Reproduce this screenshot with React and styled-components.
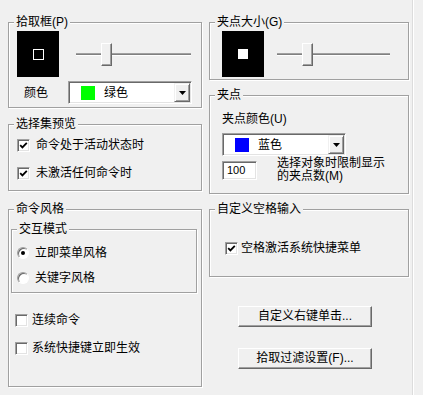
import styled, {createGlobalStyle} from "styled-components"

const GlobalStyle = createGlobalStyle`
  html, body {
    margin: 0;
    padding: 0;
    background: #f0f0f0;
  }
  body {
    font-family: "Liberation Sans", "Noto Sans CJK SC", sans-serif;
    font-size: 12px;
    color: #000;
  }
`

const Page = styled.div`
  width: 413px;
  height: 395px;
  box-sizing: border-box;
  display: flex;
  gap: 7px;
  padding-left: 8px;
  border-right: 1px solid #dcdcdc;
  box-shadow: 1px 0 0 #fff;
  overflow: hidden;
`

const Column = styled.div`
  display: flex;
  flex-direction: column;
  width: ${(p) => p.$w}px;
  flex-shrink: 0;
`

const Group = styled.div`
  position: relative;
  box-sizing: border-box;
  height: ${(p) => p.$h}px;
  margin-top: ${(p) => p.$mt}px;
  border: 1px solid #a0a0a0;
  box-shadow: inset 1px 1px 0 #fff, 1px 1px 0 #fff;
`

const InnerGroup = styled(Group)`
  margin-left: 2px;
  margin-right: 4px;
`

const Legend = styled.span`
  position: absolute;
  top: -8px;
  left: 5px;
  padding: 0 2px;
  line-height: 14px;
  background: #f0f0f0;
  white-space: nowrap;
`

const PreviewRow = styled.div`
  display: flex;
  align-items: center;
  padding: 8px 0 0 ${(p) => p.$pl}px;
`

const Preview = styled.div`
  width: 42px;
  height: 46px;
  background: #000;
  display: flex;
  align-items: center;
  justify-content: center;
  flex-shrink: 0;
`

const Marker = styled.div`
  box-sizing: border-box;
  width: ${(p) => (p.$filled ? 10 : 11)}px;
  height: ${(p) => (p.$filled ? 10 : 11)}px;
  border: 1px solid #fff;
  background: ${(p) => (p.$filled ? "#fff" : "transparent")};
`

const SliderBox = styled.div`
  position: relative;
  width: ${(p) => p.$w}px;
  height: 23px;
  margin-left: ${(p) => p.$ml}px;
  display: flex;
  align-items: center;
`

const Track = styled.div`
  width: 100%;
  height: 3px;
  box-sizing: border-box;
  background: #808080;
  border-top: 1px solid #a0a0a0;
  border-bottom: 1px solid #fff;
`

const Thumb = styled.div`
  position: absolute;
  top: 0;
  left: 25px;
  width: 11px;
  height: 23px;
  box-sizing: border-box;
  background: #f0f0f0;
  border: 1px solid;
  border-color: #fff #696969 #696969 #fff;
  box-shadow: inset -1px -1px 0 #a0a0a0;
`

const FieldRow = styled.div`
  display: flex;
  align-items: center;
  margin-top: 4px;
  padding-left: 15px;
`

const FieldLabel = styled.span`
  width: 44px;
  line-height: 14px;
`

const ComboBox = styled.div`
  width: 124px;
  height: 23px;
  box-sizing: border-box;
  background: #fff;
  border: 1px solid;
  border-color: #a0a0a0 #fff #fff #a0a0a0;
  box-shadow: inset 1px 1px 0 #696969, inset -1px -1px 0 #e3e3e3;
  display: flex;
  align-items: center;
  padding-left: 12px;
  padding-right: 1px;
  margin-top: ${(p) => p.$mt || 0}px;
`

const Swatch = styled.span`
  width: 14px;
  height: 14px;
  background: ${(p) => p.$color};
  flex-shrink: 0;
`

const ComboText = styled.span`
  flex: 1;
  margin-left: 9px;
  line-height: 14px;
`

const DropButton = styled.span`
  width: 16px;
  height: 19px;
  box-sizing: border-box;
  background: #f0f0f0;
  border: 1px solid;
  border-color: #f0f0f0 #696969 #696969 #f0f0f0;
  box-shadow: inset 1px 1px 0 #fff, inset -1px -1px 0 #a0a0a0;
  display: flex;
  align-items: center;
  justify-content: center;
`

const CheckList = styled.div`
  display: flex;
  flex-direction: column;
  gap: ${(p) => p.$gap}px;
  padding: ${(p) => p.$pt}px 0 0 ${(p) => p.$pl}px;
`

const Option = styled.label`
  display: flex;
  align-items: center;
  height: 20px;
  gap: ${(p) => p.$gap}px;
  white-space: nowrap;
  line-height: 14px;
`

const Box = styled.span`
  width: 13px;
  height: 13px;
  box-sizing: border-box;
  background: #fff;
  border: 1px solid;
  border-color: #a0a0a0 #fff #fff #a0a0a0;
  box-shadow: inset 1px 1px 0 #696969, inset -1px -1px 0 #e3e3e3;
  display: flex;
  align-items: center;
  justify-content: center;
  flex-shrink: 0;
`

const RadioRing = styled(Box)`
  width: 12px;
  height: 12px;
  border-radius: 50%;
  box-shadow: inset 1px 1px 0 #696969;
`

const Dot = styled.span`
  width: 4px;
  height: 4px;
  border-radius: 50%;
  background: #000;
`

const PlainLabel = styled.div`
  margin-top: ${(p) => p.$mt}px;
  line-height: 14px;
`

const Section = styled.div`
  padding-left: ${(p) => p.$pl}px;
`

const LimitRow = styled.div`
  display: flex;
  align-items: center;
  margin-top: 1px;
`

const Edit = styled.div`
  width: 35px;
  height: 19px;
  box-sizing: border-box;
  background: #fff;
  border: 1px solid;
  border-color: #a0a0a0 #fff #fff #a0a0a0;
  box-shadow: inset 1px 1px 0 #696969, inset -1px -1px 0 #e3e3e3;
  padding-left: 4px;
  font-size: 11px;
  line-height: 17px;
`

const Note = styled.div`
  margin-left: 20px;
  line-height: 13px;
`

const ButtonStack = styled.div`
  display: flex;
  flex-direction: column;
  padding-left: 29px;
`

const PushButton = styled.button`
  width: 134px;
  height: 21px;
  margin-top: ${(p) => p.$mt}px;
  padding: 0;
  box-sizing: border-box;
  font: inherit;
  color: #000;
  background: #f0f0f0;
  border: 1px solid;
  border-color: #fff #696969 #696969 #fff;
  box-shadow: inset -1px -1px 0 #a0a0a0;
  line-height: 17px;
`

function Slider({w, ml}) {
  return (
    <SliderBox $w={w} $ml={ml}>
      <Track />
      <Thumb />
    </SliderBox>
  )
}

function Combo({color, text, mt}) {
  return (
    <ComboBox $mt={mt}>
      <Swatch $color={color} />
      <ComboText>{text}</ComboText>
      <DropButton>
        <svg width="7" height="4" viewBox="0 0 7 4">
          <polygon points="0,0 7,0 3.5,4" fill="#000" />
        </svg>
      </DropButton>
    </ComboBox>
  )
}

function Check({checked, gap = 6, children}) {
  return (
    <Option $gap={gap}>
      <Box>
        {checked && (
          <svg width="9" height="9" viewBox="0 0 9 9">
            <path d="M1.2 4.2 L3.4 6.4 L7.8 1.8" fill="none" stroke="#000" strokeWidth="1.8" />
          </svg>
        )}
      </Box>
      {children}
    </Option>
  )
}

function Radio({on, children}) {
  return (
    <Option $gap={6}>
      <RadioRing>{on && <Dot />}</RadioRing>
      {children}
    </Option>
  )
}

export default function App() {
  return (
    <>
      <GlobalStyle />
      <Page>
        <Column $w={194}>
          <Group $h={86} $mt={22}>
            <Legend>拾取框(P)</Legend>
            <PreviewRow $pl={8}>
              <Preview>
                <Marker />
              </Preview>
              <Slider w={115} ml={17} />
            </PreviewRow>
            <FieldRow>
              <FieldLabel>颜色</FieldLabel>
              <Combo color="#00ff00" text="绿色" />
            </FieldRow>
          </Group>

          <Group $h={67} $mt={16}>
            <Legend>选择集预览</Legend>
            <CheckList $pt={10} $pl={8} $gap={8}>
              <Check checked>命令处于活动状态时</Check>
              <Check checked>未激活任何命令时</Check>
            </CheckList>
          </Group>

          <Group $h={178} $mt={18}>
            <Legend>命令风格</Legend>
            <InnerGroup $h={64} $mt={19}>
              <Legend>交互模式</Legend>
              <CheckList $pt={13} $pl={5} $gap={5}>
                <Radio on>立即菜单风格</Radio>
                <Radio>关键字风格</Radio>
              </CheckList>
            </InnerGroup>
            <CheckList $pt={17} $pl={6} $gap={8}>
              <Check gap={4}>连续命令</Check>
              <Check gap={4}>系统快捷键立即生效</Check>
            </CheckList>
          </Group>
        </Column>

        <Column $w={200}>
          <Group $h={58} $mt={22}>
            <Legend>夹点大小(G)</Legend>
            <PreviewRow $pl={12}>
              <Preview>
                <Marker $filled />
              </Preview>
              <Slider w={113} ml={13} />
            </PreviewRow>
          </Group>

          <Group $h={99} $mt={15}>
            <Legend>夹点</Legend>
            <Section $pl={12}>
              <PlainLabel $mt={16}>夹点颜色(U)</PlainLabel>
              <Combo color="#0000ff" text="蓝色" mt={7} />
              <LimitRow>
                <Edit>100</Edit>
                <Note>
                  选择对象时限制显示
                  <br />
                  的夹点数(M)
                </Note>
              </LimitRow>
            </Section>
          </Group>

          <Group $h={68} $mt={15}>
            <Legend>自定义空格输入</Legend>
            <CheckList $pt={28} $pl={15} $gap={0}>
              <Check checked gap={3}>空格激活系统快捷菜单</Check>
            </CheckList>
          </Group>

          <ButtonStack>
            <PushButton $mt={29}>自定义右键单击...</PushButton>
            <PushButton $mt={21}>拾取过滤设置(F)...</PushButton>
          </ButtonStack>
        </Column>
      </Page>
    </>
  )
}
